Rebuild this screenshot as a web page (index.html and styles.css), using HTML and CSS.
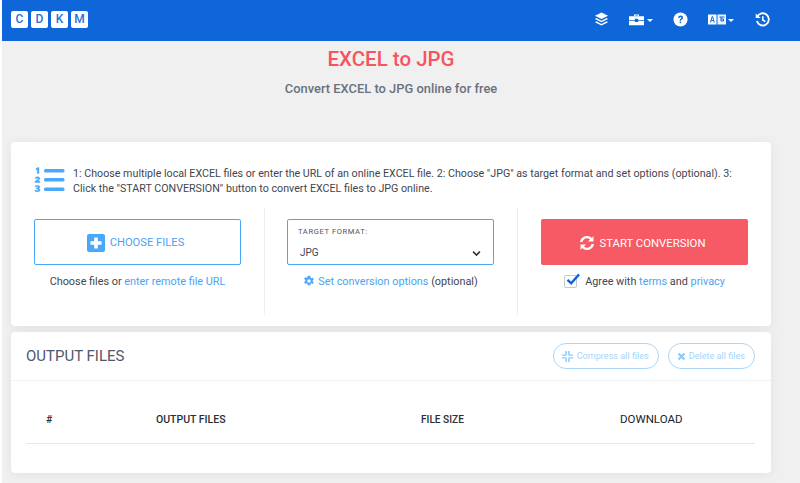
FILE: index.html
```html
<!DOCTYPE html>
<html lang="en">
<head>
<meta charset="utf-8">
<title>EXCEL to JPG</title>
<link rel="stylesheet" href="styles.css">
</head>
<body>
<header class="topbar">
  <div class="logo"><span>C</span><span>D</span><span>K</span><span>M</span></div>
  <nav class="tools">
    <svg class="i layers" viewBox="0 0 16 16"><path d="M8 0.500 15 4 8 7.500 1 4Z" fill="#fff"/><path d="M2.600 6.400 8 9.200l5.400-2.800L15 7.500 8 11 1 7.500Z" fill="#fff"/><path d="M2.600 9.900 8 12.700l5.400-2.800L15 11l-7 3.500L1 11Z" fill="#fff"/></svg>
    <span class="tool box"><svg class="i" viewBox="0 0 18 14"><path d="M6 3V1h6v2h-1.400V2.300H7.400V3Z" fill="#fff"/><path d="M0 3h18v4.500H11V6H7v1.500H0Z" fill="#fff"/><path d="M0 8.500h7V10h4V8.500h7V14H0Z" fill="#fff"/></svg><i class="caret"></i></span>
    <svg class="i help" viewBox="0 0 16 16"><circle cx="8" cy="8" r="7.500" fill="#fff"/><path d="M5.500 6.200C5.600 4.600 6.700 3.800 8.100 3.800c1.500 0 2.600.9 2.600 2.200 0 1.100-.6 1.600-1.300 2.100-.6.400-.8.600-.8 1.300H7.100c0-1.200.4-1.700 1.100-2.200.5-.4.800-.6.800-1.100 0-.5-.4-.8-.9-.8-.6 0-1 .4-1 1Z" fill="#0f66d9"/><rect x="7.100" y="10.200" width="1.600" height="1.700" fill="#0f66d9"/></svg>
    <span class="tool lang"><svg class="i" viewBox="0 0 18 11"><rect x="0" y="0.500" width="8.500" height="10" fill="#fff"/><rect x="9.500" y="0.500" width="8.500" height="10" fill="#eef4fc"/><path d="M2.500 8.500 4.200 2.500h.4l1.700 6M3.200 6.500h2.400" fill="none" stroke="#0f66d9" stroke-width="1"/><path d="M11.500 3h5M13 3v4h2.500V5H13" fill="none" stroke="#0f66d9" stroke-width="1"/></svg><i class="caret"></i></span>
    <svg class="i history" viewBox="0 0 16 16"><path d="M2.300 5.200A6.500 6.500 0 1 1 2 9.700" fill="none" stroke="#fff" stroke-width="2"/><path d="M0.800 1.500 6 6.500H0.800Z" fill="#fff"/><path d="M8.300 4.500v4l2.700 1.700" fill="none" stroke="#fff" stroke-width="1.700"/></svg>
  </nav>
</header>

<main class="page">
  <h1 class="title">EXCEL to JPG</h1>
  <p class="subtitle">Convert EXCEL to JPG online for free</p>

  <section class="card convert">
    <div class="intro">
      <svg class="steps" viewBox="0 0 31 27"><g fill="#4aa8fb" stroke="#4aa8fb" stroke-width=".4" transform="translate(-1 0)"><path d="M3 1.500 5 .5h1V6.500H4.300V2.500L3 3Z"/><path d="M2 15.500v-1.300c2.400-1.500 3-2 3-2.500 0-.8-1.400-.6-2.600 0v-1.400c1.800-.8 4.400-.7 4.400 1.200 0 1-.8 1.700-2.400 2.600h2.500v1.400Z"/><path d="M2.200 18.800c2-.6 4.700-.5 4.700 1.200 0 .8-.5 1.200-1.200 1.400.8.200 1.400.7 1.400 1.500 0 2-3 2.200-5 1.500v-1.300c1.300.5 3.200.6 3.200-.3 0-.6-.8-.8-2-.8v-1.100c1.100 0 1.800-.2 1.800-.7 0-.8-1.600-.6-2.900-.2Z"/></g><rect x="10" y="2" width="20.500" height="3.500" rx="1.500" fill="#4aa8fb"/><rect x="10" y="11" width="20.500" height="3.500" rx="1.500" fill="#4aa8fb"/><rect x="10" y="20.500" width="20.500" height="3.500" rx="1.500" fill="#4aa8fb"/></svg>
      <p>1: Choose multiple local EXCEL files or enter the URL of an online EXCEL file. 2: Choose "JPG" as target format and set options (optional). 3: Click the "START CONVERSION" button to convert EXCEL files to JPG online.</p>
    </div>
    <div class="cols">
      <div class="col">
        <button class="btn choose"><svg class="plus" viewBox="0 0 18 18"><rect width="18" height="18" rx="2" fill="#4aa8fb"/><path d="M7.200 3.500h3.600v3.700h3.700v3.600h-3.700v3.700H7.200v-3.700H3.500V7.200h3.700Z" fill="#fff"/></svg>CHOOSE FILES</button>
        <p class="note">Choose files or <a>enter remote file URL</a></p>
      </div>
      <div class="col">
        <div class="select">
          <span class="select-label">TARGET FORMAT:</span>
          <span class="select-value">JPG<svg class="chev" viewBox="0 0 10 7"><path d="M1.200 1.500 5 5.200 8.800 1.500" fill="none" stroke="#333" stroke-width="1.800"/></svg></span>
        </div>
        <p class="note"><svg class="gear" viewBox="0 0 24 24"><path fill="#4aa8fb" d="M19.400 13c.1-.3.100-.7.100-1s0-.7-.1-1l2.300-1.800-2.300-4-2.700 1.100c-.5-.4-1.100-.7-1.700-1L14.600 1.500H9.400L9 4.300c-.6.300-1.200.6-1.700 1L4.600 4.200l-2.300 4L4.600 10c-.1.300-.1.700-.1 1s0 .7.100 1l-2.300 1.800 2.300 4 2.700-1.100c.5.400 1.100.7 1.700 1l.4 2.800h5.200l.4-2.800c.6-.3 1.200-.6 1.700-1l2.700 1.100 2.300-4ZM12 15.500a3.500 3.500 0 1 1 0-7 3.500 3.500 0 0 1 0 7Z"/></svg><a>Set conversion options</a> (optional)</p>
      </div>
      <div class="col">
        <button class="btn start"><svg class="sync" viewBox="0 0 16 16"><path d="M1 7C1.500 3.500 4.400 1 8 1c1.900 0 3.600.7 4.800 1.900L14.500 1v5.500H9l2-2C10.200 3.700 9.200 3.300 8 3.300 5.800 3.300 4 4.800 3.500 7Z" fill="#fff"/><path d="M15 9c-.5 3.500-3.400 6-7 6-1.900 0-3.600-.7-4.800-1.900L1.500 15V9.500H7l-2 2c.8.800 1.800 1.200 3 1.200 2.200 0 4-1.500 4.500-3.700Z" fill="#fff"/></svg>START CONVERSION</button>
        <div class="note agree"><span class="check"><svg viewBox="0 0 16 14"><path d="M1.500 7.500 5.500 11 14 1.500" fill="none" stroke="#0f66d9" stroke-width="2.600"/></svg></span><span>Agree with <a>terms</a> and <a>privacy</a></span></div>
      </div>
    </div>
  </section>

  <section class="card output">
    <div class="out-head">
      <h2>OUTPUT FILES</h2>
      <div class="pills">
        <button class="pill"><svg viewBox="0 0 12 12"><path d="M4.500 0v3.500a1 1 0 0 1-1 1H0M7.500 0v3.500a1 1 0 0 0 1 1H12M4.500 12V8.500a1 1 0 0 0-1-1H0M7.500 12V8.500a1 1 0 0 1 1-1H12" fill="none" stroke="#8ccafc" stroke-width="1.600"/></svg>Compress all files</button>
        <button class="pill"><svg class="x" viewBox="0 0 12 12"><path d="M2 2l8 8M10 2l-8 8" fill="none" stroke="#8ccafc" stroke-width="3"/></svg>Delete all files</button>
      </div>
    </div>
    <div class="table">
      <div class="row">
        <span class="c-num">#</span>
        <span class="c-name">OUTPUT FILES</span>
        <span class="c-size">FILE SIZE</span>
        <span class="c-dl">DOWNLOAD</span>
      </div>
    </div>
  </section>
</main>
</body>
</html>
```

FILE: styles.css
```css
* { box-sizing: border-box; }
html, body { margin: 0; height: 100%; overflow: hidden; }
body {
  background: #f0f0f0;
  border-left: 2px solid #fff;
  font-family: Roboto, "Noto Sans", sans-serif;
  font-size: 11px;
  color: #3f4650;
}
p, h1, h2 { margin: 0; font-weight: 400; }
a { color: #4aa3f5; }
button { font-family: inherit; cursor: pointer; }

.topbar {
  height: 41px;
  background: #0f66d9;
  display: flex;
  align-items: center;
  justify-content: space-between;
  padding: 0 30px 2px 9px;
}
.logo { display: flex; gap: 3px; }
.logo span {
  width: 17px;
  height: 17px;
  background: #fff;
  border-radius: 2px;
  color: #2a6fdc;
  font-size: 12px;
  font-weight: 500;
  text-align: center;
  line-height: 17px;
}
.tools { display: flex; align-items: center; }
.i { display: block; }
.tool { display: flex; align-items: center; gap: 2px; }
.caret {
  border-top: 3px solid #fff;
  border-left: 3px solid transparent;
  border-right: 3px solid transparent;
  margin-top: 1px;
}
.layers { width: 15px; height: 15px; }
.box { margin-left: 20px; gap: 3px; }
.box .i { width: 15px; height: 13px; }
.help { width: 15px; height: 15px; margin-left: 20px; }
.lang { margin-left: 20px; }
.lang .i { width: 18px; height: 11px; }
.history { width: 15px; height: 15px; margin-left: 21px; }

.page { padding: 0 29px 0 9px; }
.title {
  color: #f6555f;
  font-size: 20.500px;
  font-weight: 500;
  text-align: center;
  line-height: 27px;
  margin-top: 5px;
}
.subtitle {
  color: #69727d;
  font-size: 12.900px;
  font-weight: 500;
  text-align: center;
  line-height: 17px;
  margin-top: 7px;
}
.card {
  background: #fff;
  border-radius: 4px;
  box-shadow: 0 2px 12px rgba(0, 0, 0, .06);
}
.convert { margin-top: 45px; height: 184px; padding: 24px 23px 0; }
.intro { display: flex; align-items: flex-start; gap: 8px; }
.steps { width: 31px; height: 27px; flex: none; margin-top: 1px; }
.intro p { font-size: 10.700px; line-height: 15px; width: 665px; }
.cols { display: grid; grid-template-columns: 253px 253px 254px; margin: 12px -23px 0; }
.col {
  height: 107px;
  padding: 11px 23px 0;
  border-left: 1px solid #eceef0;
  text-align: center;
}
.col:first-child { border-left: 0; }
.col:nth-child(2) { padding-left: 22px; }
.btn {
  width: 207px;
  height: 46px;
  padding: 1px 4px 0 0;
  display: flex;
  align-items: center;
  justify-content: center;
  font-size: 11.200px;
  border-radius: 2px;
}
.choose { background: #fff; color: #4aa3f5; border: 1px solid #4aa8fb; }
.plus { width: 18px; height: 18px; margin-right: 5px; }
.start { background: #f65a64; border: 0; color: #fff; font-size: 11.350px; }
.sync { width: 16px; height: 16px; margin-right: 4px; }
.note { margin-top: 9px; line-height: 16px; white-space: nowrap; font-size: 10.850px; }
.select {
  width: 207px;
  height: 46px;
  border: 1px solid #4aa8fb;
  border-radius: 2px;
  padding: 6px 10px 0;
  text-align: left;
}
.select-label { display: block; font-size: 7.600px; letter-spacing: .6px; line-height: 11px; color: #555; }
.select-value { display: flex; align-items: center; justify-content: space-between; line-height: 16px; margin-top: 8px; padding: 0 2px; font-size: 10px; }
.chev { width: 9px; height: 7px; }
.gear { width: 12px; height: 12px; vertical-align: -2px; margin-right: 3px; }
.agree { display: flex; justify-content: center; align-items: center; }
.check {
  width: 13px;
  height: 13px;
  border: 1px solid #c4c8ce;
  border-radius: 2px;
  margin: -1px 8px 0 0;
  position: relative;
}
.check svg { position: absolute; left: 1px; top: -3px; width: 15px; height: 13px; }

.output { margin-top: 6px; height: 141px; }
.out-head {
  height: 49px;
  display: flex;
  align-items: center;
  justify-content: space-between;
  padding: 0 16px 0 15px;
  border-bottom: 1px solid #f0f1f3;
}
.out-head h2 { font-size: 15px; color: #50586a; }
.pills { display: flex; gap: 9px; }
.pill {
  height: 26px;
  border: 1px solid #a9d8fc;
  border-radius: 13px;
  background: #fff;
  color: #a5d4fa;
  font-size: 9.100px;
  display: flex;
  align-items: center;
  padding: 0 9px 0 8px;
}
.pill svg { width: 11px; height: 11px; margin-right: 4px; }
.pill .x { width: 9px; height: 9px; margin-right: 3px; }
.table { padding: 0 16px 0 15px; }
.row {
  height: 63px;
  padding-top: 14px;
  display: grid;
  grid-template-columns: 130px 265px 199px 1fr;
  align-items: center;
  border-bottom: 1px solid #e6e8ec;
  color: #2a2e35;
  font-size: 10.500px;
  font-weight: 500;
  text-align: left;
}
.c-num { padding-left: 20px; }
.c-size { font-size: 10.100px; }
.c-dl { color: #20242a; font-weight: 400; font-size: 11.500px; }
```
